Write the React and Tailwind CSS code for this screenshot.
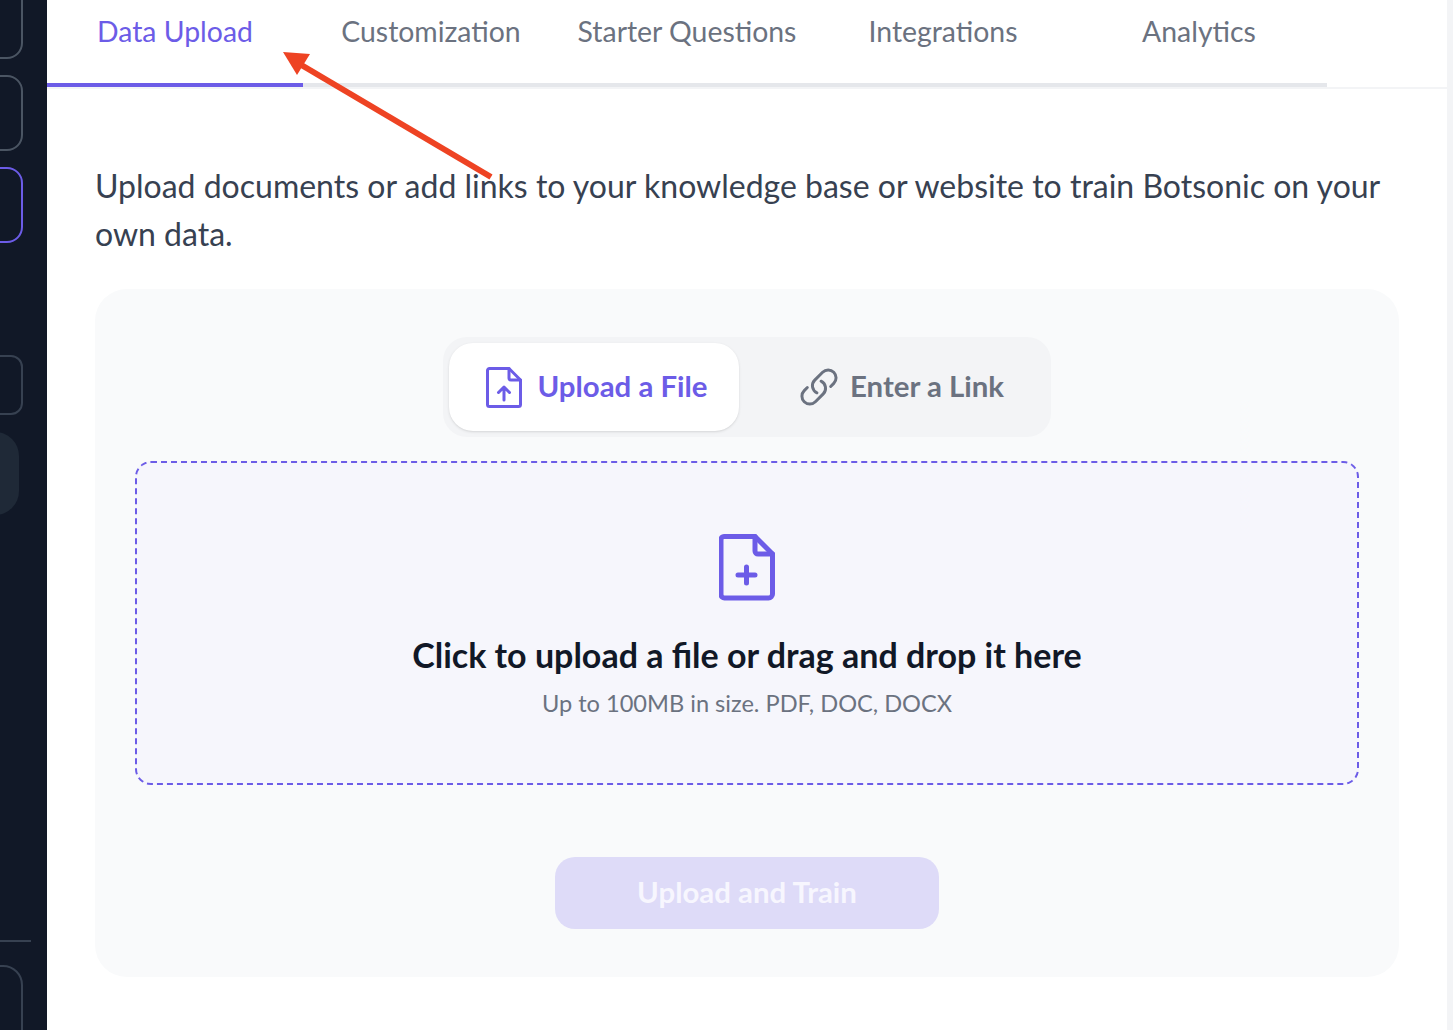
import React from "react";

const font = { fontFamily: '"Lato", "Liberation Sans", sans-serif' };

function SideBox({ h, mt, border = "border-[#4b5563]", round = "rounded-[16px]" }) {
  return <div className={`shrink-0 w-[60px] ml-[-37px] border-2 ${border} ${round} ${h} ${mt}`} />;
}

function Sidebar() {
  return (
    <aside className="w-[47px] shrink-0 h-full bg-[#111827] overflow-hidden flex flex-col">
      <div className="shrink-0 w-[60px] ml-[-37px] mt-[-40px] h-[99px] border-2 border-[#4b5563] rounded-[16px]" />
      <SideBox h="h-[76px]" mt="mt-[16px]" />
      <SideBox h="h-[76px]" mt="mt-[16px]" border="border-[#6c5ce7]" />
      <SideBox h="h-[60px]" mt="mt-[112px]" border="border-[#374151]" round="rounded-[12px]" />
      <div className="shrink-0 w-[60px] ml-[-41px] mt-[17px] h-[83px] bg-[#1f2937] rounded-[24px]" />
      <div className="shrink-0 w-[31px] h-[2px] mt-[425px] bg-[#374151]" />
      <div className="shrink-0 w-[60px] ml-[-37px] mt-[23px] h-[120px] border-2 border-[#374151] rounded-[20px]" />
    </aside>
  );
}

const tabs = ["Data Upload", "Customization", "Starter Questions", "Integrations", "Analytics"];

function Tabs() {
  return (
    <div className="border-b-2 border-[#f3f4f6]">
      <div className="flex w-[1280px] h-[87px]">
        {tabs.map((t, i) => (
          <div
            key={t}
            className={`w-[256px] pt-[11px] text-center text-[28.4px] leading-[40px] border-b-4 ${
              i === 0 ? "text-[#6c5ce7] border-[#6c5ce7]" : "text-[#6b7280] border-[#e5e7eb]"
            }`}
          >
            {t}
          </div>
        ))}
      </div>
    </div>
  );
}

function FileUp() {
  return (
    <svg width="36" height="41" viewBox="0 0 36 41" fill="none" stroke="#6c5ce7" strokeWidth="3" strokeLinejoin="round" strokeLinecap="round">
      <path d="M3.500 1.500H23L34.500 13V37.500a2 2 0 0 1-2 2H3.500a2 2 0 0 1-2-2V3.500a2 2 0 0 1 2-2Z" />
      <path d="M23 1.500V11a2 2 0 0 0 2 2h9.500" />
      <path d="M18 33V20M12.500 25.500 18 20l5.500 5.500" />
    </svg>
  );
}

function LinkIcon() {
  return (
    <svg width="42" height="42" viewBox="0 0 24 24" fill="none" stroke="#6b7280" strokeWidth="1.7" strokeLinecap="round" strokeLinejoin="round">
      <path d="M13.19 8.688a4.5 4.5 0 0 1 1.242 7.244l-4.5 4.5a4.5 4.5 0 0 1-6.364-6.364l1.757-1.757m13.35-.622 1.757-1.757a4.5 4.5 0 0 0-6.364-6.364l-4.5 4.5a4.5 4.5 0 0 0 1.242 7.244" />
    </svg>
  );
}

function FilePlus() {
  return (
    <svg width="56" height="67" viewBox="0 0 56 67" fill="none" stroke="#6c5ce7" strokeWidth="5" strokeLinejoin="round" strokeLinecap="round">
      <path d="M5 2.500H36L53.500 20V60a4 4 0 0 1-4 4H5.500a3.500 3.500 0 0 1-3.500-3.500V5.500a3 3 0 0 1 3-3Z" />
      <path d="M36 2.500V17a3 3 0 0 0 3 3h14.500" />
      <path d="M27.500 33V49M19 41h17" />
    </svg>
  );
}

function Arrow() {
  return (
    <svg className="absolute left-0 top-0 pointer-events-none" width="520" height="200" viewBox="0 0 520 200" fill="none">
      <line x1="491" y1="177" x2="298" y2="63" stroke="#ee4323" strokeWidth="6" />
      <polygon points="283,52 310,54 297,75" fill="#ee4323" />
    </svg>
  );
}

export default function App() {
  return (
    <div className="relative flex w-[1453px] h-[1030px] overflow-hidden bg-white" style={font}>
      <Sidebar />
      <main className="flex-1 min-w-0">
        <Tabs />
        <p className="ml-[48px] mt-[73px] w-[1300px] text-[32px] leading-[48px] text-[#374151]">
          Upload documents or add links to your knowledge base or website to train Botsonic on your own data.
        </p>
        <section className="ml-[48px] mt-[31px] w-[1304px] h-[688px] rounded-[32px] bg-[#f9fafb] px-[40px] pt-[48px] flex flex-col items-center">
          <div className="w-[608px] h-[100px] rounded-[24px] bg-[#f3f4f6] p-[6px] flex">
            <div className="w-[290px] h-[88px] pl-[6px] rounded-[24px] bg-white shadow-sm flex items-center justify-center gap-[15px]">
              <FileUp />
              <span className="text-[29.4px] pb-[2px] font-bold text-[#6c5ce7]">Upload a File</span>
            </div>
            <div className="flex-1 pl-[18px] flex items-center justify-center gap-[10px]">
              <LinkIcon />
              <span className="text-[29.4px] pb-[2px] font-bold text-[#6b7280]">Enter a Link</span>
            </div>
          </div>
          <div className="mt-[24px] w-full h-[324px] rounded-[16px] border-2 border-dashed border-[#6c5ce7] bg-[#f6f6fc] flex flex-col items-center pt-[71px]">
            <FilePlus />
            <h2 className="mt-[32px] text-[34px] leading-[44px] font-bold text-[#111827]">
              Click to upload a file or drag and drop it here
            </h2>
            <p className="mt-[6px] text-[23.6px] leading-[40px] text-[#6b7280]">Up to 100MB in size. PDF, DOC, DOCX</p>
          </div>
          <button className="mt-[72px] w-[384px] h-[72px] pb-[2px] rounded-[20px] bg-[#dedbf8] text-[29.4px] font-bold text-[#f7f6fe]">
            Upload and Train
          </button>
        </section>
      </main>
      <div className="w-[6px] shrink-0 h-full bg-[#f3f4f6]" />
      <Arrow />
    </div>
  );
}
